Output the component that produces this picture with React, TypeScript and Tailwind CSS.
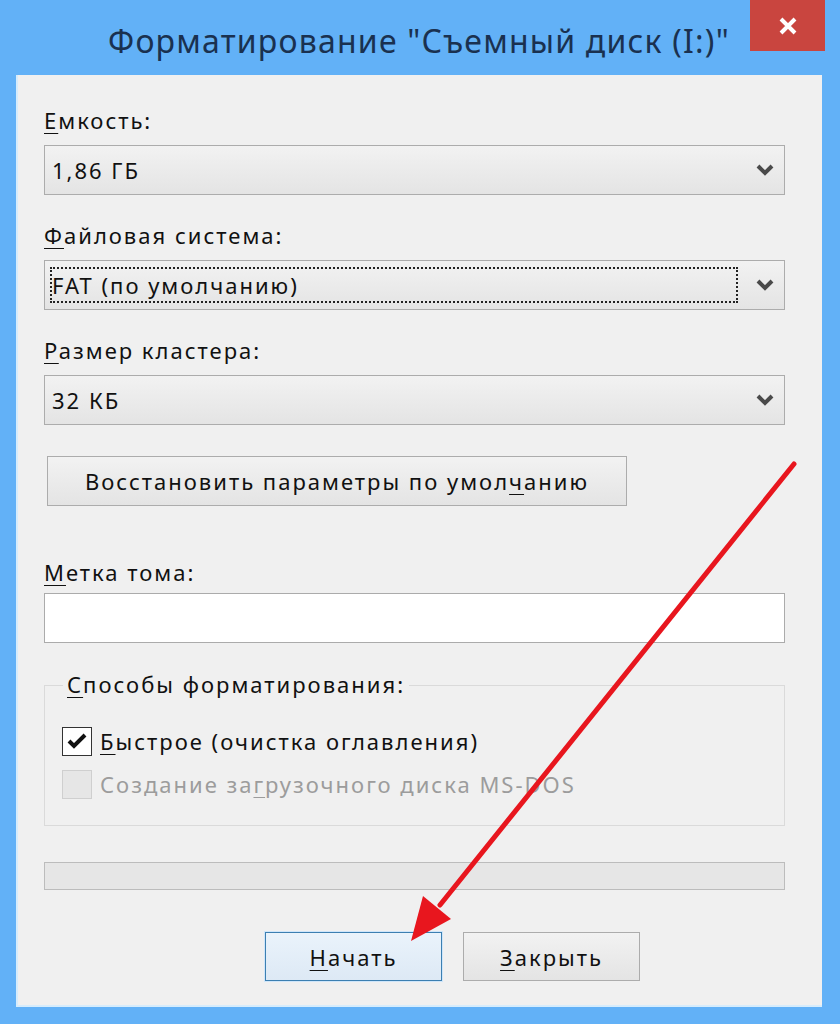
import React from "react";

const FONT = { fontFamily: '"Noto Sans", "Open Sans", sans-serif' };

function Chevron() {
  return (
    <svg width="18" height="12" viewBox="0 0 18 12" className="shrink-0">
      <path d="M2 2 L9 9 L16 2" fill="none" stroke="#4a4a4a" strokeWidth="4" strokeLinejoin="miter" />
    </svg>
  );
}

function U({ children }: { children: React.ReactNode }) {
  return <span className="underline decoration-1 underline-offset-[4px]">{children}</span>;
}

function Combo({ value, focused }: { value: React.ReactNode; focused?: boolean }) {
  return (
    <div className="flex h-[50px] w-[741px] items-center border border-[#acacac] bg-gradient-to-b from-[#f2f2f2] to-[#e4e4e4] pl-[5px] pr-[10px]">
      <div
        className={
          "flex h-[36px] w-[688px] items-center pl-0 " +
          (focused ? "border-2 border-dotted border-[#222]" : "border-2 border-transparent")
        }
      >
        <span className="text-[22px] leading-none text-[#111]">{value}</span>
      </div>
      <div className="flex flex-1 justify-end">
        <Chevron />
      </div>
    </div>
  );
}

function Label({ children, mt }: { children: React.ReactNode; mt: string }) {
  return <div className={"h-[30px] text-[22px] leading-[30px] text-[#111] " + mt}>{children}</div>;
}

export default function App() {
  return (
    <div className="relative h-[1024px] w-[840px] overflow-hidden bg-[#62b1f7]" style={FONT}>
      {/* title bar */}
      <div className="flex h-[75px] w-[806px] ml-[16px] items-center justify-center pt-[6px]">
        <span className="text-[32px] leading-none tracking-[1.2px] text-[#1a3150]">
          Форматирование "Съемный диск (I:)"
        </span>
      </div>
      <div className="absolute left-[750px] top-0 flex h-[51px] w-[75px] items-center justify-center bg-[#c9453f]">
        <svg width="22" height="22" viewBox="0 0 22 22">
          <path d="M4 4 L18 18 M18 4 L4 18" stroke="#ffffff" strokeWidth="4" />
        </svg>
      </div>

      {/* panel */}
      <div className="ml-[16px] h-[932px] w-[806px] border-b-2 border-l-2 border-[#d6ecfc] bg-[#f0f0f0] pl-[26px] pt-[30px] tracking-[2px]">
        <Label mt="mt-0">
          <U>Е</U>мкость:
        </Label>
        <div className="mt-[10px]">
          <Combo value="1,86 ГБ" />
        </div>

        <Label mt="mt-[25px]">
          <U>Ф</U>айловая система:
        </Label>
        <div className="mt-[10px]">
          <Combo value="FAT (по умолчанию)" focused />
        </div>

        <Label mt="mt-[25px]">
          <U>Р</U>азмер кластера:
        </Label>
        <div className="mt-[10px]">
          <Combo value="32 КБ" />
        </div>

        <div className="ml-[3px] mt-[31px] flex h-[50px] w-[580px] items-center justify-center border border-[#acacac] bg-gradient-to-b from-[#f2f2f2] to-[#e4e4e4]">
          <span className="text-[22px] leading-none text-[#111]">
            Восстановить параметры по умол<U>ч</U>анию
          </span>
        </div>

        <Label mt="mt-[51px]">
          <U>М</U>етка тома:
        </Label>
        <div className="mt-[6px] h-[50px] w-[741px] border border-[#ababab] bg-white" />

        {/* group box */}
        <div className="relative mt-[42px] h-[141px] w-[741px] border border-[#dadada]">
          <div className="absolute left-[18px] top-[-17px] bg-[#f0f0f0] px-[4px] text-[22px] leading-[30px] text-[#111]">
            <U>С</U>пособы форматирования:
          </div>
          <div className="flex flex-col pl-[17px] pt-[40px]">
            <div className="flex h-[30px] items-center gap-[8px]">
              <div className="flex h-[29px] w-[30px] items-center justify-center border border-[#333] bg-white">
                <svg width="20" height="18" viewBox="0 0 20 18">
                  <path d="M2 9 L7 14 L18 3" fill="none" stroke="#111" strokeWidth="4" />
                </svg>
              </div>
              <span className="text-[22px] leading-none text-[#111]">
                <U>Б</U>ыстрое (очистка оглавления)
              </span>
            </div>
            <div className="mt-[13px] flex h-[30px] items-center gap-[8px]">
              <div className="h-[29px] w-[30px] border border-[#cfcfcf] bg-[#e6e6e6]" />
              <span className="text-[22px] leading-none text-[#9c9c9c]">
                Создание за<U>г</U>рузочного диска MS-DOS
              </span>
            </div>
          </div>
        </div>

        {/* progress */}
        <div className="mt-[36px] h-[28px] w-[741px] border border-[#bcbcbc] bg-[#e6e6e6]" />

        {/* buttons */}
        <div className="ml-[221px] mt-[42px] flex gap-[21px]">
          <div className="flex h-[49px] w-[177px] items-center justify-center border border-[#3c7fb1] bg-gradient-to-b from-[#eaf3fb] to-[#dde9f5] shadow-[0_0_0_1px_#cfe6fa]">
            <span className="text-[22px] leading-none text-[#111]">
              <U>Н</U>ачать
            </span>
          </div>
          <div className="flex h-[49px] w-[177px] items-center justify-center border border-[#acacac] bg-gradient-to-b from-[#f2f2f2] to-[#e4e4e4]">
            <span className="text-[22px] leading-none text-[#111]">
              <U>З</U>акрыть
            </span>
          </div>
        </div>
      </div>

      {/* red arrow annotation */}
      <svg className="pointer-events-none absolute left-0 top-0" width="840" height="1024" viewBox="0 0 840 1024">
        <line x1="794" y1="464" x2="440" y2="905" stroke="#e8161e" strokeWidth="5" strokeLinecap="round" />
        <polygon points="411,941 451,919 423,896" fill="#e8161e" />
      </svg>
    </div>
  );
}
